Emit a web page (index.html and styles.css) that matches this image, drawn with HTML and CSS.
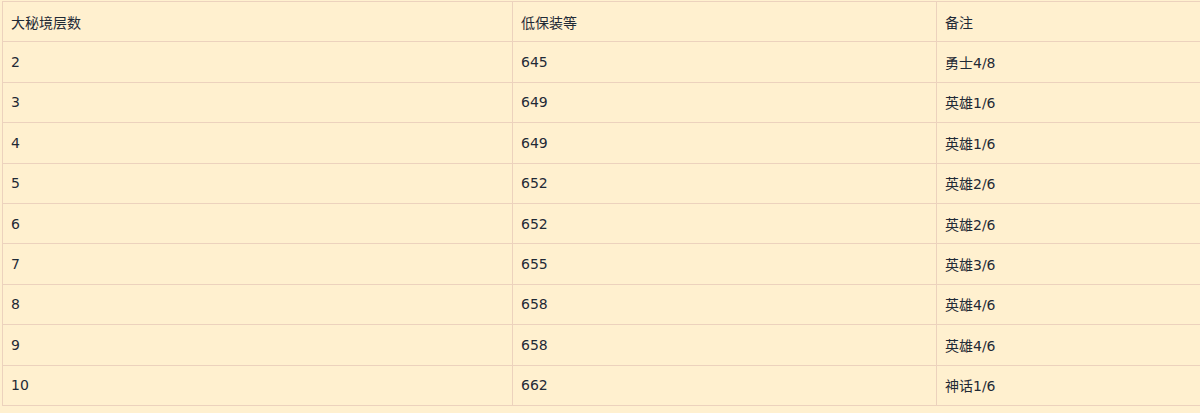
FILE: index.html
```html
<!DOCTYPE html>
<html lang="zh">
<head>
<meta charset="utf-8">
<link rel="stylesheet" href="styles.css">
</head>
<body>
<div class="wrap">
<table class="grid">
  <colgroup><col class="c1"><col class="c2"><col class="c3"></colgroup>
  <tr><td>大秘境层数</td><td>低保装等</td><td>备注</td></tr>
  <tr><td>2</td><td>645</td><td>勇士4/8</td></tr>
  <tr><td>3</td><td>649</td><td>英雄1/6</td></tr>
  <tr><td>4</td><td>649</td><td>英雄1/6</td></tr>
  <tr><td>5</td><td>652</td><td>英雄2/6</td></tr>
  <tr><td>6</td><td>652</td><td>英雄2/6</td></tr>
  <tr><td>7</td><td>655</td><td>英雄3/6</td></tr>
  <tr><td>8</td><td>658</td><td>英雄4/6</td></tr>
  <tr><td>9</td><td>658</td><td>英雄4/6</td></tr>
  <tr><td>10</td><td>662</td><td>神话1/6</td></tr>
</table>
</div>
</body>
</html>
```
FILE: styles.css
```css
html, body {
  margin: 0;
  padding: 0;
  overflow: hidden;
  background: #fff0cf;
}
.wrap {
  padding: 1px 0 0 2px;
}
.grid {
  border-collapse: collapse;
  table-layout: fixed;
  width: 1220px;
  font-family: "DejaVu Sans", "Noto Sans CJK SC", sans-serif;
  font-size: 14px;
  color: #1f2a36;
  background: #fff0cf;
}
.c1 { width: 510px; }
.c2 { width: 424px; }
.c3 { width: 286px; }
.grid td {
  border: 1px solid #ecd2bd;
  padding: 0 8px;
  height: 40.4px;
  box-sizing: border-box;
  vertical-align: middle;
  white-space: nowrap;
}
```
